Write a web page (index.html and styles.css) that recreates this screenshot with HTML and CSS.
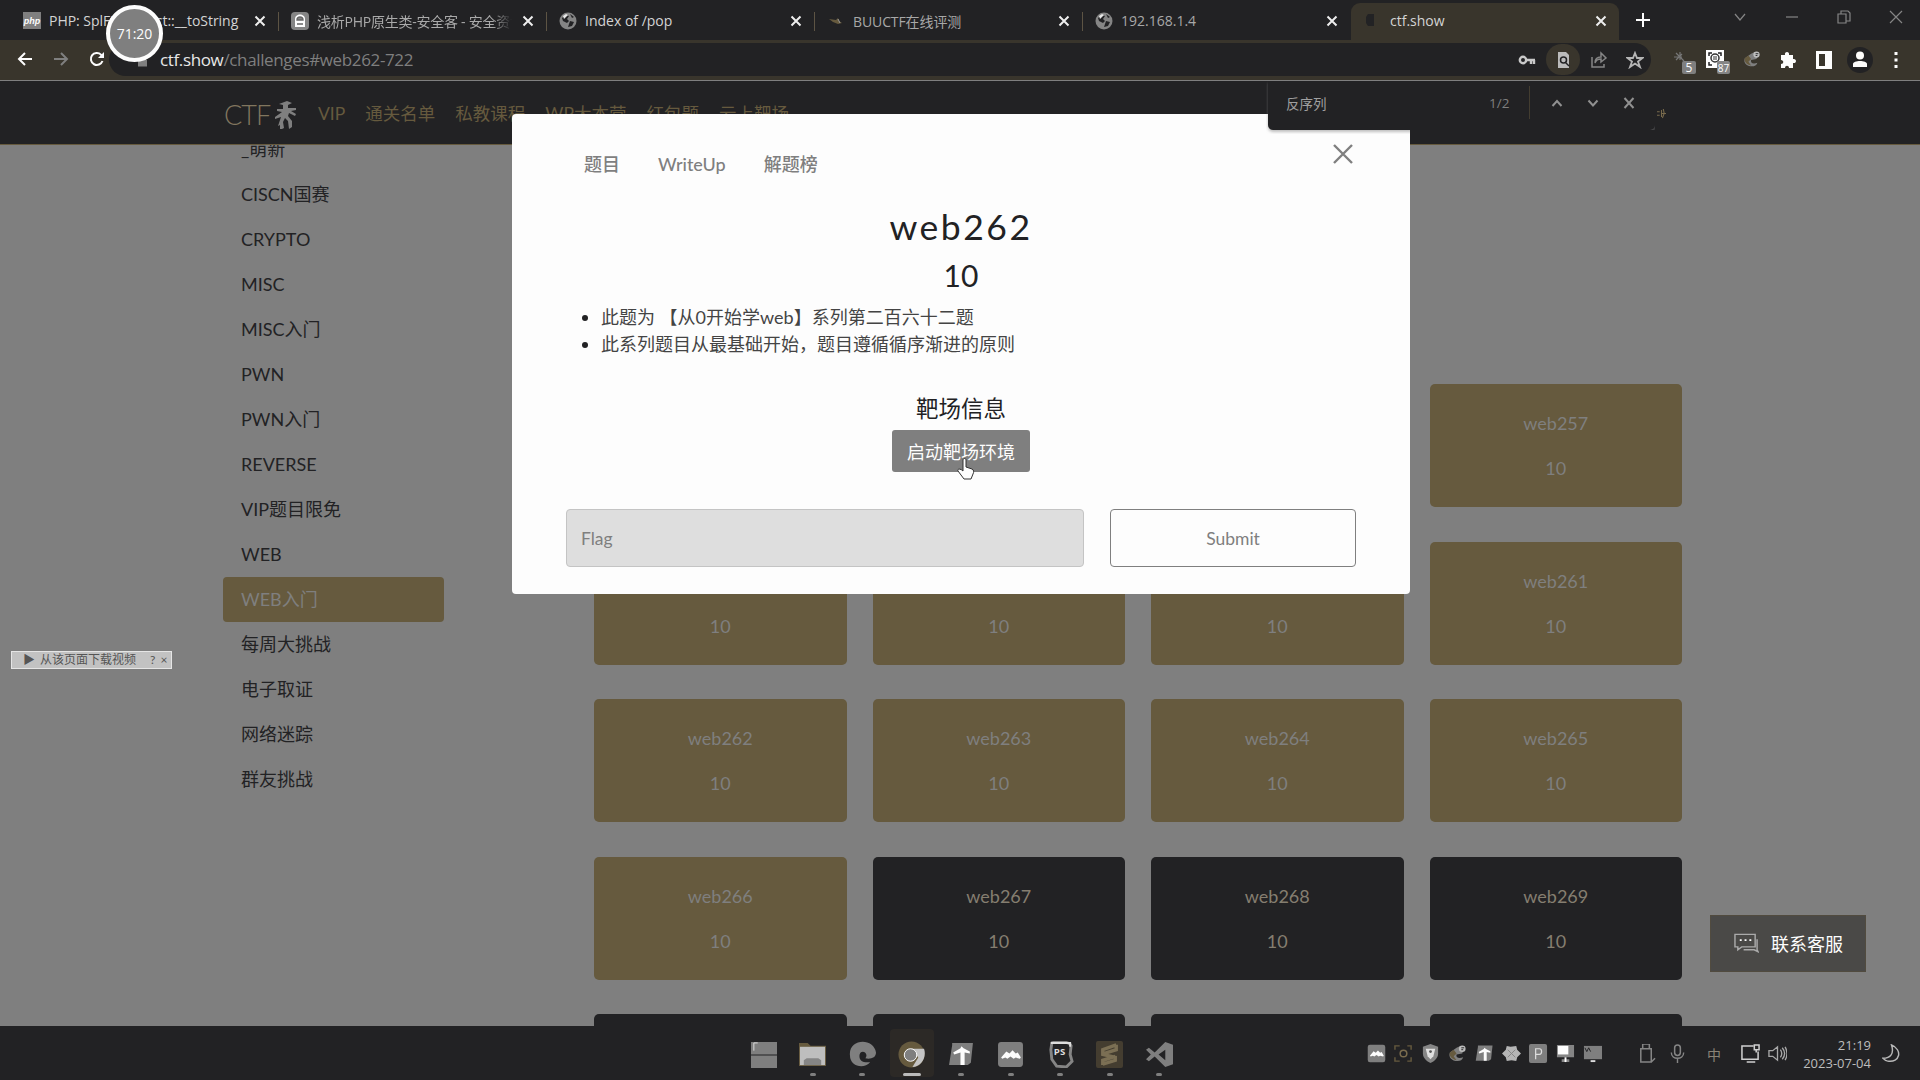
FILE: index.html
```html
<!DOCTYPE html>
<html lang="zh-CN">
<head>
<meta charset="utf-8">
<title>ctf.show</title>
<link rel="stylesheet" href="styles.css">
</head>
<body>
<svg class="defs" width="0" height="0">
  <defs>
    <symbol id="x" viewBox="0 0 12 12"><path d="M1.5 1.5l9 9M10.5 1.5l-9 9" fill="none" stroke="currentColor" stroke-width="2"/></symbol>
    <symbol id="globe" viewBox="0 0 18 18"><circle cx="9" cy="9" r="8.5" fill="#858585"/><path d="M3 6l4-3 3 1-2 3 2 2-2 2-4-2zM11 9l4 1-2 4-4 1 1-3zM11 2l4 3-2 1z" fill="#222224"/><path d="M4 4l3-2 2 1-4 4z" fill="#e8e8e8"/></symbol>
    <symbol id="peak" viewBox="0 0 26 26"><rect x="1" y="1" width="24" height="24" rx="3" fill="#7f7f7f"/><path d="M4 16l5-6 3 2 3-3 3 3 2-1 3 5-1 1-4-1-2 1-3-2-3 2-2-1-3 1z" fill="#fdfdfd"/></symbol>
    <symbol id="tee" viewBox="0 0 26 26"><path d="M4 2h20l-2 19-3 2H1L4 4z" fill="#7f7f7f"/><path d="M5 11l7-4 1-2 2 2 6 3v2l-5-1v12h-4V11l-6 2z" fill="#fdfdfd"/></symbol>
    <symbol id="cat" viewBox="0 0 20 18"><path d="M2 8c-2 5 2 9 8 9 3 0 5-1 6-4-5 2-8 0-7-3l6-1 2-6-4-2-4 2z" fill="#7f7f7f"/><path d="M2 8l4-3 3 4-3 3 3 4c-5-1-8-4-7-8z" fill="#665a3e"/><circle cx="15" cy="4" r="3.5" fill="#bdbdbd"/><path d="M14 3h3M14 5h2" stroke="#222224"/></symbol>
  </defs>
</svg>

<div class="tabstrip">
  <div class="tab"><svg class="fav" viewBox="0 0 18 18"><rect y="0" width="18" height="17" fill="#7f7f7f"/><text x="9" y="12" text-anchor="middle" class="php">php</text></svg><span class="title t1">PHP: SplFileObject::__toString</span><svg class="close"><use href="#x"/></svg></div>
  <div class="tab"><svg class="fav" viewBox="0 0 18 18"><rect width="18" height="18" rx="4" fill="#858585"/><path d="M4 15V7c0-6 10-6 10 0v8z" fill="#fdfdfd"/><path d="M6 8c0-4 6-4 6 0zM6 12h6" stroke="#666" fill="#858585" stroke-width="1.4"/></svg><span class="title t2">浅析PHP原生类-安全客 - 安全资讯平台</span><svg class="close"><use href="#x"/></svg></div>
  <div class="tab"><svg class="fav"><use href="#globe"/></svg><span class="title">Index of /pop</span><svg class="close"><use href="#x"/></svg></div>
  <div class="tab"><svg class="fav" viewBox="0 0 18 18"><path d="M2 7l7 1 2-2 1 3 3 2-4 1-5-2z" fill="#665a3e"/><path d="M11 7l2 4" stroke="#999"/></svg><span class="title dim t4">BUUCTF在线评测</span><svg class="close"><use href="#x"/></svg></div>
  <div class="tab"><svg class="fav"><use href="#globe"/></svg><span class="title dim">192.168.1.4</span><svg class="close"><use href="#x"/></svg></div>
  <div class="tab active"><svg class="fav" viewBox="0 0 18 18"><path d="M4 2h6v12H4l-2-3V5z" fill="#222224"/></svg><span class="title t6">ctf.show</span><svg class="close"><use href="#x"/></svg></div>
  <svg class="plus" viewBox="0 0 14 14"><path d="M7 0v14M0 7h14" stroke="#fdfdfd" stroke-width="2"/></svg>
  <div class="winctl">
    <svg viewBox="0 0 14 14"><path d="M2 4l5 6 5-6"/></svg>
    <svg viewBox="0 0 14 14"><path d="M1 7h12"/></svg>
    <svg viewBox="0 0 14 14"><path d="M1 4h8v9H1zM4 4V1h7l2 2v8H9"/></svg>
    <svg viewBox="0 0 14 14"><path d="M1 1l12 12M13 1L1 13"/></svg>
  </div>
</div>

<div class="toolbar">
  <div class="navbtns">
    <svg viewBox="0 0 16 16"><path d="M15 8H2M8 2L2 8l6 6"/></svg>
    <svg class="off" viewBox="0 0 16 16"><path d="M1 8h13M8 2l6 6-6 6"/></svg>
    <svg viewBox="0 0 16 16"><path d="M13.5 10A6 6 0 1 1 12 3.6L14 6"/><path d="M15 1v6H9z" fill="#fdfdfd" stroke="none"/></svg>
  </div>
  <div class="omnibox">
    <svg class="lock" viewBox="0 0 10 12"><path d="M0 5h10v7H0zM2 5V1h6v4" fill="#7f7f7f"/></svg>
    <span class="url"><b>ctf.show</b>/challenges#web262-722</span>
    <div class="omni-actions">
      <svg viewBox="0 0 18 18"><circle cx="5" cy="9" r="3.2" fill="none" stroke="#c9c9c9" stroke-width="2.4"/><path d="M8 9h9M13 9v4M16 9v4" stroke="#c9c9c9" stroke-width="2.4"/></svg>
      <span class="round"><svg viewBox="0 0 18 18"><path d="M4 1h8l3 3v13H4z" fill="#bbb"/><circle cx="9.500" cy="9" r="3" fill="none" stroke="#222224" stroke-width="1.5"/><path d="M11 11l4 4" stroke="#222224" stroke-width="1.5"/></svg></span>
      <svg viewBox="0 0 18 18"><path d="M2 6v10h12v-3M5 12c0-5 3-6 6-6V2l5 5-5 4V8c-3 0-5 1-6 4z" fill="none" stroke="#858585" stroke-width="1.5"/></svg>
      <svg viewBox="0 0 18 18"><path d="M9 2l2 5h5.500l-4.500 3.500 2 5.500-5-3.500L4 16l2-5.500L1.500 7H7z" fill="none" stroke="#b5b5b5" stroke-width="1.8"/></svg>
    </div>
  </div>
  <div class="exts">
    <svg class="ext-badged" viewBox="0 0 24 24"><path d="M4 3l8 8M8 2v8M2 7h8M4 10l6-6" stroke="#777" stroke-width="1.2"/><rect x="10" y="11" width="14" height="13" rx="2" fill="#7f7f7f"/><text x="17" y="22" text-anchor="middle" class="badge">5</text></svg>
    <svg class="ext-badged" viewBox="0 0 24 24"><rect x="0" y="0" width="18" height="18" fill="#fdfdfd"/><path d="M3 6V3h3M12 3h3v3M3 12v3h3" fill="none" stroke="#222224" stroke-width="1.5"/><circle cx="9" cy="8" r="4" fill="none" stroke="#333" stroke-width="1.5"/><path d="M7 7h4M7 9h4" stroke="#333"/><rect x="11" y="11" width="13" height="13" rx="2" fill="#858585"/><text x="17.500" y="22" text-anchor="middle" class="badge sm">87</text></svg>
    <svg class="ext-cat" viewBox="0 0 20 20"><use href="#cat" width="20" height="18"/></svg>
    <svg viewBox="0 0 18 18"><path d="M2 4h4c-1-4 5-4 4 0h4v4c4-1 4 5 0 4v5h-4c0-3-4-3-4 0H2v-4c3 0 3-4 0-4z" fill="#fdfdfd"/></svg>
    <svg viewBox="0 0 18 18"><path d="M1 0h16v18H1zM4 3v12h6V3z" fill="#fdfdfd" fill-rule="evenodd"/></svg>
    <svg class="user" viewBox="0 0 26 26"><circle cx="13" cy="13" r="13" fill="#222224"/><circle cx="13" cy="8.500" r="4" fill="#fdfdfd"/><path d="M6 20v-3c0-4 14-4 14 0v3z" fill="#fdfdfd"/></svg>
    <svg viewBox="0 0 18 18"><path d="M7.500 1h3v3h-3zM7.500 7.500h3v3h-3zM7.500 14h3v3h-3z" fill="#fdfdfd"/></svg>
  </div>
</div>

<div class="page">
  <header class="sitenav">
    <span class="logo">CTF<svg viewBox="0 0 21 28"><path d="M4 3l8-3 5 2-4 2v3l8 0v2l-5 1 5 3-1 2-6-3-1 3 4 5v6l-3 2-1-8-3-3-2 4 1 6-4 2 0-5-2 1 3-9-6 2v-2l7-5-5-1v-2l6 0V4z" fill="#7f7f7f"/></svg></span>
    <nav><a>VIP</a><a>通关名单</a><a>私教课程</a><a>WP大本营</a><a>红包题</a><a>云上靶场</a></nav>
  </header>
  <div class="content">
    <aside>
      <a>_萌新</a><a>CISCN国赛</a><a>CRYPTO</a><a>MISC</a><a>MISC入门</a><a>PWN</a><a>PWN入门</a><a>REVERSE</a><a>VIP题目限免</a><a>WEB</a><a class="on">WEB入门</a><a>每周大挑战</a><a>电子取证</a><a>网络迷踪</a><a>群友挑战</a>
    </aside>
    <main>
      <div class="card"></div><div class="card"></div><div class="card"></div><div class="card"><p>web257</p><p>10</p></div>
      <div class="card"><p>&nbsp;</p><p>10</p></div><div class="card"><p>&nbsp;</p><p>10</p></div><div class="card"><p>&nbsp;</p><p>10</p></div><div class="card"><p>web261</p><p>10</p></div>
      <div class="card"><p>web262</p><p>10</p></div><div class="card"><p>web263</p><p>10</p></div><div class="card"><p>web264</p><p>10</p></div><div class="card"><p>web265</p><p>10</p></div>
      <div class="card"><p>web266</p><p>10</p></div><div class="card dark"><p>web267</p><p>10</p></div><div class="card dark"><p>web268</p><p>10</p></div><div class="card dark"><p>web269</p><p>10</p></div>
      <div class="card dark"></div><div class="card dark"></div><div class="card dark"></div><div class="card dark"></div>
    </main>
  </div>

  <div class="modal">
    <svg class="modal-close" viewBox="0 0 20 20"><path d="M1 1l18 18M19 1L1 19" stroke="#7f7f7f" stroke-width="2.4"/></svg>
    <div class="mtabs"><span>题目</span><span>WriteUp</span><span>解题榜</span></div>
    <h2>web262</h2>
    <h3>10</h3>
    <ul><li>此题为 【从0开始学web】系列第二百六十二题</li><li>此系列题目从最基础开始，题目遵循循序渐进的原则</li></ul>
    <h4>靶场信息</h4>
    <button class="launch">启动靶场环境</button>
    <div class="form"><div class="flag">Flag</div><div class="submit">Submit</div></div>
  </div>

  <div class="find"><span class="q">反序列</span><span class="n">1/2</span><i></i>
    <svg viewBox="0 0 12 12"><path d="M1.500 9L6 4l4.500 5"/></svg><svg viewBox="0 0 12 12"><path d="M1.500 3.500l4.500 5 4.500-5"/></svg><svg viewBox="0 0 12 12"><path d="M1.500 1l9 10M10.500 1l-9 10"/></svg>
  </div>
  <svg class="spark" viewBox="0 0 10 12"><path d="M0 4h3M0 8h3M5 2v8M7 1l1 5-2 5M5 6h5" fill="none" stroke="#786a4c" stroke-width="1.2"/></svg>
  <div class="dlbar"><span>▶</span><span>从该页面下载视频</span><span class="help">?</span><span>×</span></div>
  <div class="contact"><svg viewBox="0 0 26 20"><path d="M1 1h21v13H8l-4 3v-3H1zM24 6v11l1 2-4-2H10" fill="none" stroke="#aaa" stroke-width="1.500"/><path d="M6 7h2M11 7h2M16 7h2" stroke="#fdfdfd" stroke-width="2"/></svg>联系客服</div>
</div>

<footer class="taskbar">
  <div class="apps">
    <span><svg viewBox="0 0 28 28"><path d="M1 1h27v13H1zM1 15h27v13H1z" fill="#7f7f7f"/><path d="M4 10V2h4" fill="none" stroke="#ddd"/></svg></span>
    <span class="run"><svg viewBox="0 0 28 28"><path d="M0 2h9l3 3h16v21H0z" fill="#665a3e"/><path d="M1 6h26v19H1z" fill="#bebebe"/><path d="M5 25v-5l3-2h12l3 2v5z" fill="#858585"/></svg></span>
    <span class="run"><svg viewBox="0 0 28 28"><path d="M1 15C-1-3 26-4 28 12c0 6-6 7-11 6 4-5-4-10-6-4-1 5 2 9 11 8-7 8-21 4-21-7z" fill="#7f7f7f"/></svg></span>
    <span class="run active"><svg viewBox="0 0 28 28"><circle cx="14" cy="14" r="13.500" fill="#665a3e"/><path d="M14 8h13c3 9-3 19-12 19l6-10z" fill="#c4c4c4"/><circle cx="13" cy="14.500" r="6.500" fill="#7f7f7f" stroke="#fdfdfd"/></svg></span>
    <span class="run"><svg><use href="#tee"/></svg></span>
    <span class="run"><svg><use href="#peak"/></svg></span>
    <span class="run"><svg viewBox="0 0 28 28"><path d="M5 2c5-2 18-2 20 3l-1 9 2 7-6 6-10-1-5-7-1-10z" fill="none" stroke="#858585" stroke-width="3"/><path d="M4 2h20v4" fill="none" stroke="#ddd" stroke-width="2"/><text x="13" y="15" text-anchor="middle" class="pstxt">PS</text></svg></span>
    <span class="run"><svg viewBox="0 0 28 28"><rect width="28" height="28" rx="2" fill="#443d30"/><path d="M21 4L7 9v5l13 3v3L7 24M21 4v5L8 13M20 16l-13 4v5" fill="none" stroke="#7b6f54" stroke-width="3.500"/></svg></span>
    <span class="run"><svg viewBox="0 0 28 28"><path d="M20 1l8 3v20l-8 3L9 16l-6 5-3-2 5-5-5-5 3-2 6 5zM20 9l-7 5 7 6z" fill="#7f7f7f" fill-rule="evenodd"/></svg></span>
  </div>
  <div class="tray">
    <svg><use href="#peak"/></svg>
    <svg viewBox="0 0 20 20"><path d="M1 6V2h5M14 2h4v4M18 14v4h-4M6 18H1v-4" fill="none" stroke="#665a3e" stroke-width="1.500"/><circle cx="10" cy="10" r="3.500" fill="none" stroke="#7a6c4e" stroke-width="1.600"/></svg>
    <svg viewBox="0 0 20 20"><path d="M10 0l8 3v7c0 5-4 8-8 10-4-2-8-5-8-10V3z" fill="#858585"/><path d="M5 5h10l-2 8-3 3-3-3z" fill="#e0e0e0"/><circle cx="10" cy="8" r="1.500" fill="#555"/></svg>
    <svg><use href="#cat"/></svg>
    <svg><use href="#tee"/></svg>
    <svg viewBox="0 0 20 20"><path d="M5 2l4 1 6-1 1 4 4 4-4 4-1 4-5-1-5 1-1-4-4-4 4-4z" fill="#b5b5b5"/><path d="M6 6l8 8M14 6l-8 8" stroke="#858585"/></svg>
    <svg viewBox="0 0 20 20"><rect width="19" height="20" rx="2" fill="#7f7f7f"/><path d="M7 16V5h4c3 0 3 6 0 6H7" fill="none" stroke="#ddd" stroke-width="1.300"/></svg>
    <svg viewBox="0 0 20 20"><path d="M1 1h18v13H1zM6 16h8v3H6z" fill="#858585"/><path d="M2 2h11v9H2z" fill="#fdfdfd"/><path d="M10 14v5" stroke="#fdfdfd" stroke-width="2"/></svg>
    <svg viewBox="0 0 20 20"><path d="M1 2h19v14H1z" fill="#7f7f7f"/><path d="M2 4l2 4 2-4 2 4" stroke="#222224" fill="none"/><path d="M8 18h5" stroke="#ddd" stroke-width="2"/></svg>
    <div class="sys">
      <svg viewBox="0 0 20 20"><path d="M6 5V0h7v5M4 5h11v14H4zM15 19l4-4" fill="none" stroke="#858585" stroke-width="1.600"/></svg>
      <svg viewBox="0 0 20 20"><rect x="7" y="1" width="6" height="11" rx="3" fill="none" stroke="#858585" stroke-width="1.600"/><path d="M3.500 9c0 8 13 8 13 0M10 15v5" fill="none" stroke="#858585" stroke-width="1.500"/></svg>
      <span class="ime">中</span>
      <svg viewBox="0 0 20 20"><path d="M13 2H1v14h17V8M6 19h9M14 1h5v5h-5zM16 6v3" fill="none" stroke="#d0d0d0" stroke-width="1.600"/></svg>
      <svg viewBox="0 0 20 20"><path d="M1 7h4l5-4v14l-5-4H1zM13 6q3 4 0 8M15 4q5 6 0 12M18 3q4 7 0 14" fill="none" stroke="#a8a8a8" stroke-width="1.400"/></svg>
      <div class="clock"><div>21:19</div><div>2023-07-04</div></div>
      <svg class="moon" viewBox="0 0 20 20"><path d="M10 1c12 5 9 19-4 17-2 0-4-2-5-3 8 0 12-5 9-14z" fill="none" stroke="#b8b8b8" stroke-width="1.500"/></svg>
    </div>
  </div>
</footer>

<div class="timer">71:20</div>
<svg class="cursor" viewBox="0 0 18 22"><path d="M6 13V2c0-2 3-2 3 0v7l6 2c2 1 2 3 1 5l-2 5H7l-6-8c-1-2 2-3 5 0z" fill="#fdfdfd" stroke="#333" stroke-width="1"/></svg>
</body>
</html>
```
FILE: styles.css
```css
* { box-sizing: border-box; }
:root {
  --ink: #222224;
  --brown: #665a3e;
  --gray: #7f7f7f;
  --white: #fdfdfd;
  --frame: #39352c;
}
body {
  margin: 0; width: 1920px; height: 1080px; overflow: hidden; position: relative;
  display: flex; flex-direction: column; background: var(--gray); color: var(--ink);
  font-family: Lato, "Noto Sans CJK SC", sans-serif;
}
svg { display: block; flex: none; }
.defs { position: absolute; }
p, h2, h3, h4, ul { margin: 0; font-weight: 400; }

.tabstrip {
  height: 40px; flex: none; display: flex; padding-left: 11px; background: var(--ink);
  font-family: "Open Sans", "Noto Sans CJK SC", sans-serif; font-size: 14px; color: #d4d4d4;
}
.tab { width: 268px; height: 40px; display: flex; align-items: center; padding: 1px 7px 0 12px; position: relative; }
.tab:not(.active):not(:nth-child(5))::after { content: ""; position: absolute; right: 0; top: 12px; width: 1px; height: 19px; background: #5d5444; }
.tab.active { background: var(--frame); border-radius: 9px 9px 0 0; margin-top: 3px; height: 37px; padding: 0 9px 2px 13px; }
.fav { width: 18px; height: 18px; margin-right: 8px; }
.php { font: italic 700 9px "Liberation Sans", sans-serif; fill: #fdfdfd; }
.title { flex: none; width: 195px; margin-right: 10px; overflow: hidden; white-space: nowrap; }
.t1 { letter-spacing: -.03px; }
.t2 { letter-spacing: -.25px; color: #aaa; -webkit-mask-image: linear-gradient(90deg, #000 90%, transparent); }
.t4 { letter-spacing: -.1px; }
.dim { color: #a8a8a8; }
.close { width: 12px; height: 12px; color: #eee; }
.plus { width: 14px; height: 14px; margin: 13px 0 0 17px; }
.winctl { margin-left: auto; display: flex; gap: 38px; padding: 10px 17px 0 0; }
.winctl svg { width: 14px; height: 14px; fill: none; stroke: #858585; stroke-width: 1.2; }

.toolbar { height: 41px; flex: none; display: flex; background: var(--frame); border-bottom: 1px solid var(--gray); }
.navbtns { display: flex; gap: 20px; padding: 11px 0 0 17px; }
.navbtns svg { width: 16px; height: 16px; fill: none; stroke: var(--white); stroke-width: 2; }
.navbtns .off { stroke: var(--gray); }
.omnibox { margin: 3px 0 4px 4px; width: 1542px; flex: none; height: 33px; border-radius: 17px; background: var(--ink); display: flex; align-items: center; padding-left: 29px; font: 17px "Open Sans", sans-serif; color: var(--gray); }
.lock { width: 9px; height: 12px; margin: 3px 13px 0 0; }
.url { letter-spacing: -.36px; }
.url b { font-weight: 400; color: #e8e8e8; }
.omni-actions { margin-left: auto; display: flex; align-items: center; gap: 18px; padding-right: 7px; }
.omni-actions svg { width: 18px; height: 18px; }
.round { width: 34px; height: 31px; margin: 0 -8px; border-radius: 16px; background: var(--frame); display: grid; place-items: center; }
.exts { flex: 1; display: flex; padding-left: 21px; align-items: center; gap: 18px; }
.exts svg { width: 18px; height: 18px; }
.exts .ext-badged { width: 24px; height: 24px; margin: 4px -8px 0 0; }
.exts .ext-cat { margin-left: 3px; }
.exts .user { width: 26px; height: 26px; margin: 0 -4px; }
.badge { font: 12px "Open Sans", sans-serif; fill: #fdfdfd; }
.badge.sm { font-size: 10px; }

.page { height: 945px; flex: none; position: relative; overflow: hidden; }
.sitenav { height: 64px; background: var(--ink); border-bottom: 1px solid var(--brown); display: flex; align-items: center; padding: 4px 0 0 224px; color: var(--brown); position: relative; z-index: 1; }
.logo { display: flex; align-items: center; font-size: 27px; font-weight: 300; gap: 5px; color: #81765f; width: 94px; letter-spacing: -1px; }
.logo svg { width: 21px; height: 28px; }
.sitenav nav { display: flex; align-items: baseline; gap: 20px; font-size: 17.5px; line-height: 24px; margin-top: -1px; }
.content { display: flex; padding-left: 223px; }
aside { width: 221px; margin-top: -18px; }
aside a { display: block; height: 45px; line-height: 45px; padding-left: 18px; font-size: 18px; white-space: nowrap; border-radius: 4px; }
aside .on { background: var(--brown); color: var(--gray); }
main { margin: 239px 0 0 150px; width: 1088px; display: grid; grid-template-columns: repeat(4, 1fr); gap: 34.500px 26px; }
.card { height: 123px; background: var(--brown); color: var(--gray); border-radius: 5px; text-align: center; font-size: 18px; padding-top: 17px; }
.card p { line-height: 45px; }
.card.dark { background: var(--ink); color: #857e70; }

.modal { position: absolute; z-index: 2; left: 512px; top: 33px; width: 898px; height: 480px; background: var(--white); border-radius: 4px; padding: 35px 54px 0; }
.modal-close { position: absolute; right: 57px; top: 30px; width: 20px; height: 20px; }
.mtabs { display: flex; gap: 38px; padding-left: 18px; height: 30px; line-height: 30px; font-size: 18px; color: var(--gray); font-weight: 500; }
.modal h2 { text-align: center; font-size: 35.500px; line-height: 51px; letter-spacing: 2.500px; margin-top: 22px; }
.modal h3 { text-align: center; font-size: 30px; line-height: 46px; }
.modal ul { padding-left: 35px; font-size: 18px; line-height: 27px; margin-top: 6px; color: #444; }
.modal li::marker { color: var(--ink); }
.modal h4 { text-align: center; font-size: 22.500px; line-height: 34px; margin-top: 34px; }
.launch { display: block; margin: 4px auto 0; width: 138px; height: 42px; border: 0; border-radius: 3px; background: var(--gray); color: var(--white); font: 18px "Noto Sans CJK SC", sans-serif; padding: 0; }
.form { display: flex; justify-content: space-between; margin-top: 37px; }
.flag, .submit { height: 58px; line-height: 57px; border-radius: 4px; font-size: 17.500px; color: var(--gray); }
.flag { width: 518px; background: #dedede; border: 1px solid #c4c4c4; padding-left: 14px; }
.submit { width: 246px; border: 1px solid var(--gray); text-align: center; }

.find { position: absolute; z-index: 3; left: 1268px; top: 0; width: 387px; height: 49px; background: var(--ink); border-radius: 0 0 5px 5px; display: flex; align-items: center; padding: 0 0 6px 18px; font: 13.500px "Open Sans", "Noto Sans CJK SC", sans-serif; color: #a0a0a0; box-shadow: 0 2px 3px #8888; clip-path: polygon(-2px 0, 100% 0, 100% 49px, 142px 49px, 142px 53px, -2px 53px); }
.find span, .find i { flex: none; }
.find .q { width: 203px; }
.find .n { width: 40px; color: var(--gray); }
.find i { width: 1px; height: 33px; background: #433d30; margin-right: 21px; }
.find svg { width: 12px; height: 12px; margin-right: 24px; fill: none; stroke: #909090; stroke-width: 2; }
.spark { position: absolute; z-index: 3; left: 1657px; top: 27px; width: 9px; height: 11px; }
.dlbar { position: absolute; left: 11px; top: 570px; width: 161px; height: 18px; background: #c2c2c2; border: 1px solid #e5e5e5; display: flex; align-items: center; padding-left: 11px; gap: 5px; font-size: 12px; line-height: 16px; color: #555; white-space: nowrap; }
.dlbar .help { margin-left: 9px; }
.contact { position: absolute; left: 1710px; top: 834px; width: 156px; height: 57px; background: #4a4947; border: 1px solid #514b3f; display: flex; align-items: center; padding: 0 0 1px 23px; gap: 12px; color: var(--white); font-size: 18px; }
.contact svg { width: 25px; height: 20px; }

.taskbar { height: 54px; flex: none; background: var(--ink); display: flex; align-items: center; }
.apps { display: flex; padding-left: 741px; gap: 5.500px; }
.apps span { width: 44px; height: 48px; display: flex; align-items: flex-start; justify-content: center; padding-top: 12px; position: relative; }
.apps svg { width: 27px; height: 27px; }
.apps .run::after { content: ""; position: absolute; left: 19px; bottom: 1px; width: 6px; height: 3px; border-radius: 2px; background: var(--gray); }
.apps .active { background: #2c2926; border-radius: 4px; }
.apps .run.active::after { width: 18px; left: 13px; background: #bbb; }
.pstxt { font: 700 10px "Open Sans", sans-serif; fill: #ddd; }
.tray { display: flex; align-items: center; gap: 8px; margin-left: 186px; padding-top: 1px; }
.tray svg { width: 19px; height: 19px; }
.sys { display: flex; align-items: center; margin-left: 27px; gap: 8px; }
.sys svg:nth-child(2) { margin-left: 4px; }
.ime { font-size: 14px; color: #8a8376; width: 14px; margin: 0 12px; }
.clock { width: 76px; text-align: right; font: 13px/18px "Open Sans", sans-serif; color: #bdbdbd; }
.sys .moon { margin-left: 3px; }

.timer { position: absolute; z-index: 4; left: 106px; top: 5px; width: 57px; height: 57px; border-radius: 50%; border: 4px solid var(--white); background: var(--gray); color: var(--white); font: 14px/49px "Open Sans", sans-serif; text-align: center; }
.cursor { position: absolute; z-index: 4; left: 957px; top: 458px; width: 18px; height: 22px; }
```
